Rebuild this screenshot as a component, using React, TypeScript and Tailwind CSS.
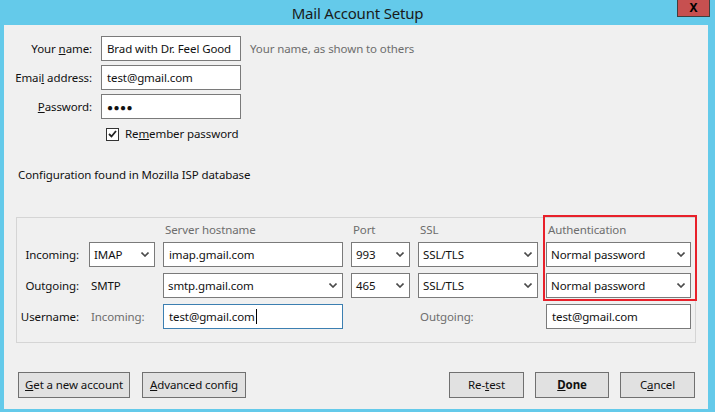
import React from "react";

function Chevron() {
  return (
    <svg width="8" height="5" viewBox="0 0 8 5" className="shrink-0">
      <path d="M0.5 0.5 L4 4 L7.5 0.5" fill="none" stroke="#4a4a4a" strokeWidth="1.6" />
    </svg>
  );
}

function Select({ value, className = "" }: { value: string; className?: string }) {
  return (
    <div
      className={`flex h-[25px] items-center justify-between border border-[#7a7a7a] bg-white pl-[4px] pr-[5px] ${className}`}
    >
      <span>{value}</span>
      <Chevron />
    </div>
  );
}

function TextBox({ value, className = "" }: { value: string; className?: string }) {
  return (
    <div
      className={`flex h-[25px] items-center overflow-hidden whitespace-nowrap border border-[#7a7a7a] bg-white px-[5px] ${className}`}
    >
      {value}
    </div>
  );
}

function Button({ children, className = "" }: { children: React.ReactNode; className?: string }) {
  return (
    <div
      className={`flex h-[26px] items-center justify-center border border-[#707070] bg-[#e1e1e1] ${className}`}
    >
      {children}
    </div>
  );
}

export default function App() {
  return (
    <div
      className="flex h-[412px] w-[715px] flex-col bg-[#64caea] text-[11.5px] leading-[16px] tracking-[-0.1px] text-[#111]"
      style={{ fontFamily: '"Noto Sans", "Segoe UI", sans-serif' }}
    >
      {/* Title bar */}
      <div className="relative flex h-[25px] shrink-0 items-center justify-center">
        <span className="pt-[1px] text-[15px] tracking-[-0.2px] text-[#1a1a1a]">Mail Account Setup</span>
        <div className="absolute right-[5px] top-0 flex h-[17px] w-[33px] items-center justify-center border border-t-0 border-[#3f3f3f] bg-[#c75050] text-[12px] font-bold text-black">
          X
        </div>
      </div>

      {/* Content */}
      <div className="ml-[4px] flex h-[384px] w-[704px] flex-col bg-[#f0f0f0]">
        {/* Identity */}
        <div className="grid grid-cols-[88px_140px_auto] items-center gap-x-[9px] gap-y-[4px] pt-[11px]">
          <span className="text-right">
            Your <u>n</u>ame:
          </span>
          <TextBox value="Brad with Dr. Feel Good" />
          <span className="text-[#6d6d6d]">Your name, as shown to others</span>

          <span className="text-right">
            Emai<u>l</u> address:
          </span>
          <TextBox value="test@gmail.com" />
          <span />

          <span className="text-right">
            <u>P</u>assword:
          </span>
          <TextBox value="●●●●" className="text-[10px] tracking-[0.5px]" />
          <span />
        </div>

        <div className="ml-[102px] mt-[7px] flex h-[16px] items-center gap-[6px]">
          <div className="flex h-[13px] w-[13px] items-center justify-center border border-[#333] bg-white">
            <svg width="9" height="8" viewBox="0 0 9 8">
              <path d="M1 4 L3.5 6.5 L8 1" fill="none" stroke="#222" strokeWidth="1.8" />
            </svg>
          </div>
          <span>
            Re<u>m</u>ember password
          </span>
        </div>

        <div className="ml-[14px] mt-[25px] h-[16px]">Configuration found in Mozilla ISP database</div>

        {/* Server settings group */}
        <div className="relative ml-[12px] mt-[34px] w-[680px] border border-[#d5d5d5] pb-[13px] pl-[3px] pt-[4px]">
          <div className="grid grid-cols-[61px_66px_180px_59px_120px_145px] items-center gap-x-[8px] gap-y-[4px]">
            <span />
            <span />
            <span className="pl-[2px] text-[#6d6d6d]">Server hostname</span>
            <span className="pl-[2px] text-[#6d6d6d]">Port</span>
            <span className="pl-[2px] text-[#6d6d6d]">SSL</span>
            <span className="pl-[2px] text-[#6d6d6d]">Authentication</span>

            <span className="pr-[2px] text-right">Incoming:</span>
            <Select value="IMAP" />
            <TextBox value="imap.gmail.com" />
            <Select value="993" />
            <Select value="SSL/TLS" />
            <Select value="Normal password" />

            <span className="mt-[2px] pr-[2px] text-right">Outgoing:</span>
            <span className="mt-[2px] pl-[2px]">SMTP</span>
            <Select value="smtp.gmail.com" className="mt-[2px]" />
            <Select value="465" className="mt-[2px]" />
            <Select value="SSL/TLS" className="mt-[2px]" />
            <Select value="Normal password" className="mt-[2px]" />

            <span className="mt-[2px] pr-[2px] text-right">Username:</span>
            <span className="mt-[2px] pl-[2px] text-[#6d6d6d]">Incoming:</span>
            <div className="mt-[2px] flex h-[25px] items-center border border-[#3c7fb1] bg-white px-[5px]">
              test@gmail.com
              <span className="ml-[1px] h-[15px] w-[1px] bg-black" />
            </div>
            <span />
            <span className="mt-[2px] pl-[2px] text-[#6d6d6d]">Outgoing:</span>
            <TextBox value="test@gmail.com" className="mt-[2px]" />
          </div>

          {/* Highlight annotation */}
          <div className="pointer-events-none absolute left-[526px] top-[-3px] h-[86px] w-[154px] border-2 border-[#e8202a]" />
        </div>

        {/* Footer */}
        <div className="mt-auto flex items-center pb-[11px] pl-[14px] pr-[13px]">
          <Button className="w-[112px]">
            <span>
              <u>G</u>et a new account
            </span>
          </Button>
          <Button className="ml-[12px] w-[104px]">
            <span>
              <u>A</u>dvanced config
            </span>
          </Button>
          <Button className="ml-auto w-[75px]">
            <span>
              Re-<u>t</u>est
            </span>
          </Button>
          <Button className="ml-[11px] w-[74px] font-bold">
            <span>
              <u>D</u>one
            </span>
          </Button>
          <Button className="ml-[11px] w-[75px]">
            <span>
              C<u>a</u>ncel
            </span>
          </Button>
        </div>
      </div>
    </div>
  );
}
